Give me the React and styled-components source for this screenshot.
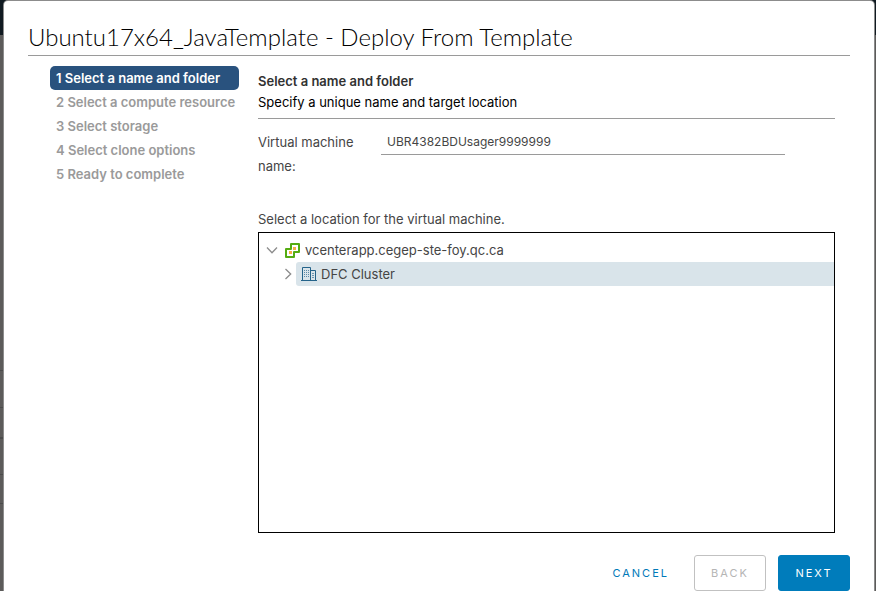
import React, { useState } from "react";
import styled, { createGlobalStyle } from "styled-components";

const GlobalStyle = createGlobalStyle`
  * { box-sizing: border-box; }
  html, body, #root { height: 100%; }
  body {
    margin: 0;
    overflow: hidden;
    font-family: Inter, "Open Sans", sans-serif;
    font-size: 13px;
    line-height: 24px;
    color: #454545;
  }
`;

const Backdrop = styled.div`
  min-height: 100%;
  display: flex;
  padding: 1px 2px 0 4px;
  background:
    linear-gradient(#8c8c8c, #8c8c8c) center top / calc(100% - 20px) 1px no-repeat,
    linear-gradient(#4b4b4b, #4b4b4b) 0 370px / 4px 1px no-repeat,
    linear-gradient(#4b4b4b, #4b4b4b) 0 407px / 4px 1px no-repeat,
    linear-gradient(#4b4b4b, #4b4b4b) 0 437px / 4px 2px no-repeat,
    linear-gradient(#4b4b4b, #4b4b4b) 0 474px / 4px 1px no-repeat,
    linear-gradient(#4b4b4b, #4b4b4b) 0 503px / 4px 1px no-repeat,
    linear-gradient(#101a21 35px, #5c5b5a 35px);
`;

const Dialog = styled.section`
  flex: 1;
  min-width: 0;
  display: flex;
  flex-direction: column;
  padding: 18px 24px 0;
  background: #fff;
  border-radius: 4px 4px 0 0;
  box-shadow: 0 0 0 1px #8c8c8c;
`;

const Title = styled.h1`
  margin: 0;
  border-bottom: 1px solid #9a9a9a;
  font-size: 24px;
  line-height: 36px;
  font-family: Lato, sans-serif;
  font-weight: 300;
  color: #000;
`;

const Body = styled.div`
  display: flex;
  gap: 19px;
  padding: 10px 15px 0 22px;
`;

const Steps = styled.ol`
  flex: none;
  width: 189px;
  margin: 0;
  padding: 0;
  list-style: none;
`;

const StepButton = styled.button`
  display: block;
  width: 100%;
  height: 24px;
  padding: 0 0 0 6px;
  border: 0;
  border-radius: 5px;
  background: ${(p) => (p.$active ? "#29527e" : "transparent")};
  color: ${(p) => (p.$active ? "#fff" : "#9a9a9a")};
  font: inherit;
  font-weight: 600;
  text-align: left;
  white-space: nowrap;
`;

const Pane = styled.div`
  flex: 1;
  min-width: 0;
`;

const PaneHeader = styled.header`
  padding: 4px 0 6px;
  border-bottom: 1px solid #9a9a9a;
`;

const PaneTitle = styled.h2`
  margin: 0;
  font-size: 13px;
  line-height: 22px;
  font-weight: 600;
  color: #313131;
`;

const PaneText = styled.p`
  margin: 0;
  line-height: 20px;
  color: #000;
`;

const Field = styled.div`
  display: flex;
  align-items: flex-start;
  gap: 13px;
  padding: 11px 50px 0 0;
`;

const FieldLabel = styled.label`
  flex: none;
  width: 110px;
`;

const NameInput = styled.input`
  flex: 1;
  min-width: 0;
  height: 25px;
  padding: 0 6px 1px;
  border: 0;
  border-bottom: 1px solid #9a9a9a;
  border-radius: 0;
  outline: 0;
  background: transparent;
  color: #454545;
  font: inherit;
  font-size: 12px;
`;

const TreeCaption = styled.p`
  margin: 29px 0 1px;
`;

const Tree = styled.ul`
  height: 301px;
  margin: 0;
  padding: 5px 0;
  border: 1px solid #000;
  overflow: auto;
  list-style: none;
`;

const Branch = styled.ul`
  margin: 0;
  padding: 0 0 0 16px;
  list-style: none;
`;

const TreeRow = styled.div`
  display: flex;
  align-items: center;
  height: 24px;
  padding-left: 5px;
`;

const Toggle = styled.button`
  flex: none;
  display: flex;
  align-items: center;
  justify-content: center;
  width: 16px;
  height: 24px;
  padding: 0;
  border: 0;
  background: transparent;
`;

const NodeLabel = styled.span`
  flex: 1;
  display: flex;
  align-items: center;
  gap: 4px;
  height: 24px;
  padding-left: 5px;
  border-radius: 3px 0 0 3px;
  background: ${(p) => (p.$selected ? "#d9e4ea" : "transparent")};
`;

const Footer = styled.footer`
  display: flex;
  justify-content: flex-end;
  gap: 12px;
  padding-top: 22px;
`;

const Button = styled.button`
  min-width: 72px;
  height: 36px;
  padding: 0 12px;
  border: 1px solid ${(p) => p.$line};
  border-radius: 3px;
  background: ${(p) => p.$fill};
  color: ${(p) => p.$ink};
  font: inherit;
  font-size: 11px;
  font-weight: 400;
  letter-spacing: 2px;
  text-transform: uppercase;
  white-space: nowrap;
`;

const Chevron = ({ open }) => (
  <svg width="12" height="12" viewBox="0 0 12 12" fill="none" stroke="#8c8c8c" strokeWidth="1.3" aria-hidden="true">
    <path d={open ? "M1 3.5 6 8.7 11 3.5" : "M3.5 1 8.7 6 3.5 11"} />
  </svg>
);

const VCenterIcon = () => (
  <svg width="16" height="16" viewBox="0 0 16 16" aria-hidden="true">
    <path d="M6 2h8v8H9v5H1V7h5z" fill="#fff" stroke="#55ac12" strokeWidth="2" strokeLinejoin="round" />
    <path d="M8 5h3v3H8zM4 9h3v3H4z" fill="#f5ad45" />
  </svg>
);

const DatacenterIcon = () => (
  <svg width="16" height="16" viewBox="0 0 16 16" fill="none" stroke="#24638a" aria-hidden="true">
    <path d="M1.5 14V1.5h8V14M9.5 4.5h5V14M0 14.5h16" />
    <path d="M3 4.5h5M3 6.5h5M3 8.5h5M3 10.5h5" strokeDasharray="1 1" opacity="0.7" />
    <path d="M11 7.5h2M11 9.5h2M11 11.5h2" opacity="0.6" />
  </svg>
);

const STEPS = [
  "Select a name and folder",
  "Select a compute resource",
  "Select storage",
  "Select clone options",
  "Ready to complete",
];

export default function App() {
  const [name, setName] = useState("UBR4382BDUsager9999999");
  return (
    <>
      <GlobalStyle />
      <Backdrop>
        <Dialog role="dialog" aria-labelledby="wizard-title">
          <Title id="wizard-title">Ubuntu17x64_JavaTemplate - Deploy From Template</Title>
          <Body>
            <Steps>
              {STEPS.map((step, i) => (
                <li key={step}>
                  <StepButton type="button" $active={i === 0} disabled={i > 0}>
                    {i + 1} {step}
                  </StepButton>
                </li>
              ))}
            </Steps>
            <Pane>
              <PaneHeader>
                <PaneTitle>Select a name and folder</PaneTitle>
                <PaneText>Specify a unique name and target location</PaneText>
              </PaneHeader>
              <Field>
                <FieldLabel htmlFor="vm-name">Virtual machine name:</FieldLabel>
                <NameInput id="vm-name" type="text" value={name} onChange={(e) => setName(e.target.value)} />
              </Field>
              <TreeCaption id="tree-caption">Select a location for the virtual machine.</TreeCaption>
              <Tree aria-labelledby="tree-caption">
                <li>
                  <TreeRow>
                    <Toggle type="button" aria-label="Collapse"><Chevron open /></Toggle>
                    <NodeLabel><VCenterIcon />vcenterapp.cegep-ste-foy.qc.ca</NodeLabel>
                  </TreeRow>
                  <Branch>
                    <li>
                      <TreeRow>
                        <Toggle type="button" aria-label="Expand"><Chevron /></Toggle>
                        <NodeLabel $selected><DatacenterIcon />DFC Cluster</NodeLabel>
                      </TreeRow>
                    </li>
                  </Branch>
                </li>
              </Tree>
            </Pane>
          </Body>
          <Footer>
            <Button type="button" $line="transparent" $fill="transparent" $ink="#0079b8">Cancel</Button>
            <Button type="button" disabled $line="#c1c1c1" $fill="#fff" $ink="#b5b5b5">Back</Button>
            <Button type="button" $line="#007cbb" $fill="#007cbb" $ink="#fff">Next</Button>
          </Footer>
        </Dialog>
      </Backdrop>
    </>
  );
}
